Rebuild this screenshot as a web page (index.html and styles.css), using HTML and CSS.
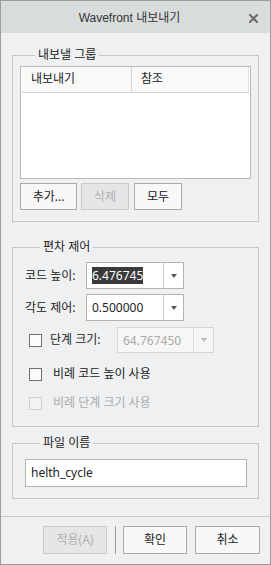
FILE: index.html
```html
<!DOCTYPE html>
<html lang="ko">
<head>
<meta charset="utf-8">
<link rel="stylesheet" href="styles.css">
</head>
<body>
<div class="window">
  <div class="titlebar">
    <span class="title">Wavefront 내보내기</span>
    <span class="close"><svg width="9" height="9" viewBox="0 0 9 9"><path d="M1 1L8 8M8 1L1 8" stroke="#6a6a6a" stroke-width="2" stroke-linecap="square"/></svg></span>
  </div>
  <div class="content">
    <div class="group g1">
      <div class="legend">내보낼 그룹</div>
      <div class="list">
        <div class="list-head">
          <div class="col c1">내보내기</div>
          <div class="col c2">참조</div>
        </div>
      </div>
      <div class="btn-row">
        <div class="btn b-add">추가...</div>
        <div class="btn b-sm disabled">삭제</div>
        <div class="btn b-sm">모두</div>
      </div>
    </div>

    <div class="group g2">
      <div class="legend">편차 제어</div>
      <div class="row r1">
        <span class="label">코드 높이:</span>
        <div class="combo">
          <div class="combo-text"><span class="sel">6.476745</span></div>
          <div class="combo-arrow"><span class="tri"></span></div>
        </div>
      </div>
      <div class="row r2">
        <span class="label">각도 제어:</span>
        <div class="combo">
          <div class="combo-text">0.500000</div>
          <div class="combo-arrow"><span class="tri"></span></div>
        </div>
      </div>
      <div class="row r3">
        <span class="check"></span>
        <span class="label step">단계 크기:</span>
        <div class="combo combo-dis">
          <div class="combo-text">64.767450</div>
          <div class="combo-arrow"><span class="tri"></span></div>
        </div>
      </div>
      <div class="row r4">
        <span class="check"></span>
        <span class="clabel">비례 코드 높이 사용</span>
      </div>
      <div class="row r5">
        <span class="check check-dis"></span>
        <span class="clabel dis">비례 단계 크기 사용</span>
      </div>
    </div>

    <div class="group g3">
      <div class="legend">파일 이름</div>
      <div class="input">helth_cycle</div>
    </div>
  </div>
  <div class="sep"></div>
  <div class="footer">
    <div class="btn fbtn disabled">적용(A)</div>
    <div class="vsep"></div>
    <div class="btn fbtn">확인</div>
    <div class="btn fbtn">취소</div>
  </div>
</div>
</body>
</html>
```
FILE: styles.css
```css
* { box-sizing: border-box; }
html, body { margin: 0; padding: 0; }
body {
  width: 271px;
  height: 565px;
  font-family: "Noto Sans", "Noto Sans CJK KR", sans-serif;
  font-size: 12px;
  color: #222;
}
.window {
  width: 271px;
  height: 565px;
  border: 1px solid #9c9c9c;
  background: #eff0f1;
  display: flex;
  flex-direction: column;
}
.titlebar {
  height: 32px;
  background: #d9dcdd;
  display: grid;
  grid-template-columns: 1fr auto 1fr;
  align-items: center;
  padding-right: 12px;
}
.title {
  grid-column: 2;
  font-family: "Liberation Sans", "Noto Sans CJK KR", sans-serif;
  font-size: 12px;
  line-height: 16px;
  color: #333;
  margin-top: 1px;
}
.close {
  grid-column: 3;
  justify-self: end;
  display: flex;
  margin-top: 3px;
}
.content {
  padding: 22px 11px 0 11px;
}
.group {
  border: 1px solid #c6c6c6;
  padding: 0 7px 11px 7px;
}
.legend {
  display: block;
  width: max-content;
  margin: -9px 0 0 15px;
  padding: 0 3px;
  line-height: 16px;
  background: #eff0f1;
}
.list {
  margin-top: 3px;
  height: 113px;
  border: 1px solid #b9b9b9;
  background: #fff;
  padding: 0 1px;
}
.list-head {
  display: flex;
  height: 26px;
  background: #f9f9f9;
  border-bottom: 1px solid #d4d4d4;
}
.col {
  line-height: 24px;
  padding-left: 9px;
}
.c1 { width: 110px; border-right: 1px solid #d4d4d4; }
.c2 { flex: 1; border-right: 1px solid #e2e2e2; }
.btn-row {
  display: flex;
  gap: 4px;
  margin-top: 4px;
}
.btn {
  height: 27px;
  border: 1px solid #ababab;
  background: #f8f8f8;
  display: flex;
  align-items: center;
  justify-content: center;
  line-height: 16px;
}
.btn.disabled {
  background: #e6e6e6;
  border-color: #cacaca;
  color: #b1b1b1;
}
.b-add { width: 57px; }
.b-sm { width: 48px; }
.b-sm + .b-sm { margin-left: 1px; }

.g2 {
  margin-top: 25px;
  padding: 0 12px 13px 12px;
}
.row {
  display: flex;
  align-items: center;
}
.r1 { margin-top: 7px; height: 27px; }
.r2 { margin-top: 5px; height: 27px; }
.r3 { margin-top: 6px; height: 26px; }
.r4 { margin-top: 11px; height: 20px; }
.r5 { margin-top: 9px; height: 20px; }
.label {
  width: 61px;
  line-height: 16px;
}
.combo {
  width: 98px;
  height: 100%;
  border: 1px solid #b3b3b3;
  background: #fff;
  display: flex;
}
.combo-text {
  flex: 1;
  display: flex;
  align-items: center;
  padding-left: 5px;
  line-height: 17px;
  border-right: 1px solid #c9c9c9;
}
.sel {
  background: #3a3a3a;
  color: #fff;
  display: block;
  line-height: 17px;
}
.combo-arrow {
  width: 19px;
  display: flex;
  align-items: center;
  justify-content: center;
}
.tri {
  width: 0;
  height: 0;
  border-left: 3.5px solid transparent;
  border-right: 3.5px solid transparent;
  border-top: 4px solid #555;
  margin-left: 1px;
}
.combo-dis {
  width: 97px;
  background: #f6f6f6;
  border-color: #d6d6d6;
  color: #aaa;
}
.combo-dis .combo-text { border-right-color: #e0e0e0; }
.combo-dis .tri { border-top-color: #b8b8b8; }
.check {
  width: 13px;
  height: 13px;
  border: 1px solid #707070;
  background: #fbfbfb;
  margin-left: 4px;
  flex: none;
}
.check-dis {
  border-color: #d0d0d0;
  background: #f2f2f2;
}
.label.step {
  width: 67px;
  margin-left: 8px;
}
.clabel {
  margin-left: 11px;
  line-height: 16px;
}
.clabel.dis { color: #acacac; }

.g3 {
  margin-top: 16px;
  padding: 0 11px 11px 12px;
}
.input {
  margin-top: 8px;
  height: 28px;
  border: 1px solid #b3b3b3;
  background: #fff;
  padding-left: 5px;
  display: flex;
  align-items: center;
  line-height: 16px;
}
.sep {
  margin-top: 17px;
  height: 1px;
  background: #c9c9c9;
}
.footer {
  display: flex;
  padding: 9px 10px 0 0;
  justify-content: flex-end;
  align-items: stretch;
}
.fbtn {
  width: 64px;
  height: 28px;
}
.footer .fbtn:last-child { margin-left: 8px; width: 65px; }
.vsep {
  width: 1px;
  background: #9f9f9f;
  margin: 0 7px 0 8px;
}
```
